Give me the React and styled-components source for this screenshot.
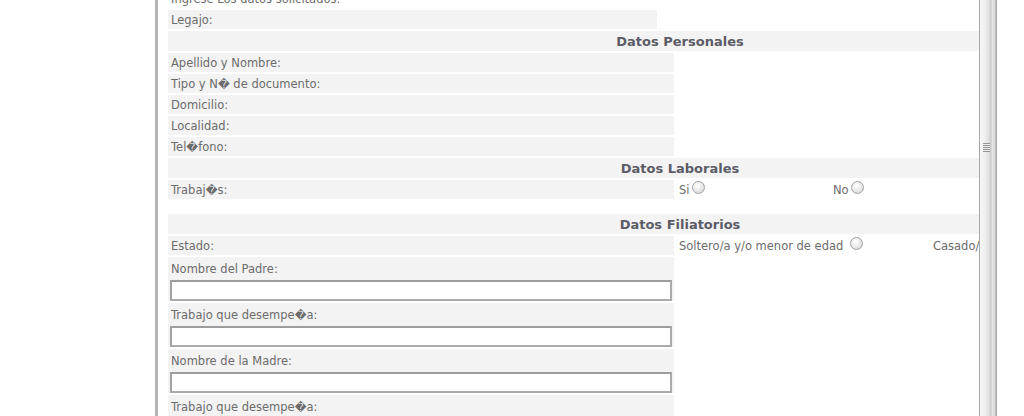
import React from "react";
import styled, { createGlobalStyle } from "styled-components";

const GlobalStyle = createGlobalStyle`
  html, body {
    margin: 0;
    padding: 0;
    background: #fff;
    overflow: hidden;
  }
  body {
    font-family: "DejaVu Sans", Verdana, sans-serif;
  }
`;

const Page = styled.div`
  height: 416px;
  padding-left: 155px;
  display: flex;
`;

const Frame = styled.div`
  width: 839px;
  height: 416px;
  border-left: 3px solid #b4b4b4;
  display: flex;
`;

const Content = styled.div`
  flex: 1;
  overflow: hidden;
  padding-left: 10px;
`;

const Scrollbar = styled.div`
  width: 18px;
  height: 416px;
  background: linear-gradient(
    to right,
    #a6a6a6 0 1px,
    #f7f7f7 1px,
    #efefef 6px,
    #d9d9d9 11px,
    #c4c4c4 12px,
    #e6e6e6 13px,
    #dadada 16px,
    #a8a8a8 17px
  );
  display: flex;
  flex-direction: column;
  align-items: center;
`;

const Grip = styled.div`
  margin-top: 143px;
  margin-right: 3px;
  width: 7px;
  height: 9px;
  background: repeating-linear-gradient(
    to bottom,
    #959595 0 1px,
    #ececec 1px 2px
  );
`;

const Sheet = styled.div`
  width: 1024px;
  margin-top: -10px;
  display: flex;
  flex-direction: column;
  gap: 2px;
`;

const Row = styled.div`
  display: flex;
  gap: 2px;
  height: ${(p) => p.$h || 19}px;
`;

const Cell = styled.div`
  width: ${(p) => (p.$w ? `${p.$w}px` : "auto")};
  flex: ${(p) => (p.$w ? "none" : 1)};
  background: ${(p) => (p.$shade ? "#f3f3f3" : "transparent")};
  padding: 0 3px;
  box-sizing: border-box;
  display: flex;
  align-items: center;
  font-size: 11.5px;
  color: #6c6c6c;
  white-space: nowrap;
`;

const Title = styled.div`
  height: 20px;
  background: #f3f3f3;
  display: flex;
  align-items: center;
  justify-content: center;
  font-size: 13px;
  font-weight: bold;
  color: #5c5c66;
`;

const Spacer = styled.div`
  height: 11px;
`;

const Block = styled.div`
  width: 506px;
  background: #f3f3f3;
  padding: 3px 0 0 2px;
  box-sizing: border-box;
  height: 44px;
`;

const BlockLabel = styled.div`
  height: 18px;
  line-height: 18px;
  padding-left: 1px;
  font-size: 11.5px;
  color: #6c6c6c;
  white-space: nowrap;
`;

const TextBox = styled.input`
  display: block;
  width: 502px;
  height: 21px;
  margin: 2px 0 0;
  box-sizing: border-box;
  border: 2px solid #ababab;
  border-top-color: #9d9d9d;
  border-left-color: #a2a2a2;
  background: #fff;
  outline: none;
`;

const Radio = styled.input.attrs({ type: "radio" })`
  appearance: none;
  width: 13px;
  height: 13px;
  margin: 0 0 4px ${(p) => p.$gap || 2}px;
  border-radius: 50%;
  border: 1px solid #a2a2a2;
  background: radial-gradient(circle at 40% 35%, #ffffff 0, #ececec 45%, #cdcdcd 100%);
  box-sizing: border-box;
  flex: none;
`;

const LABEL_W = 506;

const personal = [
  "Apellido y Nombre:",
  "Tipo y N\uFFFD de documento:",
  "Domicilio:",
  "Localidad:",
  "Tel\uFFFDfono:",
];

const parents = [
  "Nombre del Padre:",
  "Trabajo que desempe\uFFFDa:",
  "Nombre de la Madre:",
  "Trabajo que desempe\uFFFDa:",
];

export default function App() {
  return (
    <>
      <GlobalStyle />
      <Page>
        <Frame>
          <Content>
            <Sheet>
              <Row $h={18}>
                <Cell>Ingrese Los datos solicitados:</Cell>
              </Row>
              <Row>
                <Cell $w={489} $shade>
                  Legajo:
                </Cell>
              </Row>

              <Title>Datos Personales</Title>
              {personal.map((label, i) => (
                <Row key={i}>
                  <Cell $w={LABEL_W} $shade>
                    {label}
                  </Cell>
                </Row>
              ))}

              <Title>Datos Laborales</Title>
              <Row>
                <Cell $w={LABEL_W} $shade>
                  Trabaj{"\uFFFD"}s:
                </Cell>
                <Cell $w={152}>
                  Si
                  <Radio name="trabaja" />
                </Cell>
                <Cell $w={152}>
                  No
                  <Radio name="trabaja" />
                </Cell>
              </Row>
              <Spacer />

              <Title>Datos Filiatorios</Title>
              <Row>
                <Cell $w={LABEL_W} $shade>
                  Estado:
                </Cell>
                <Cell $w={252}>
                  Soltero/a y/o menor de edad
                  <Radio name="estado" $gap={7} />
                </Cell>
                <Cell $w={200}>
                  Casado/a
                  <Radio name="estado" />
                </Cell>
              </Row>
              {parents.map((label, i) => (
                <Block key={i}>
                  <BlockLabel>{label}</BlockLabel>
                  <TextBox type="text" />
                </Block>
              ))}
            </Sheet>
          </Content>
          <Scrollbar>
            <Grip />
          </Scrollbar>
        </Frame>
      </Page>
    </>
  );
}
